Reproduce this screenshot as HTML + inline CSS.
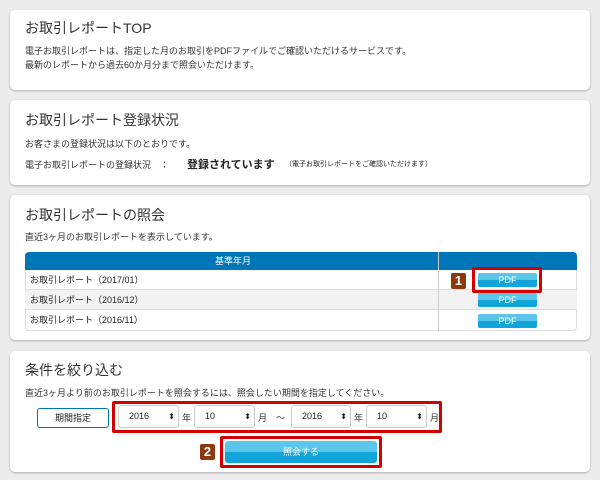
<!DOCTYPE html>
<html><head><meta charset="utf-8"><style>
*{box-sizing:border-box;margin:0;padding:0}
body{width:600px;height:480px;background:#ececec;font-family:"Liberation Sans","Noto Sans CJK JP",sans-serif;color:#222;position:relative;overflow:hidden}
.a{position:absolute;white-space:nowrap}
.card{position:absolute;left:10px;width:580px;background:#fff;border-radius:5px;box-shadow:0 1px 2px rgba(0,0,0,.25)}
.h{font-size:14px;color:#333}
.t{font-size:9px;color:#333}
.pdf{position:absolute;left:478px;width:59px;height:14px;border-radius:2px;background:linear-gradient(#5cc6ea 50%,#10a4d8 50%);color:#fff;font-size:9px;text-align:center;line-height:14px}
.sel{position:absolute;top:405px;height:23px;border:1px solid #ccc;border-radius:3px;background:#fff;font-size:9px;line-height:21px;padding-left:10px}
.sel:after{content:"⬍";position:absolute;right:3px;top:0;font-size:8px}
.red{position:absolute;border:3px solid #d40000;border-radius:2px}
.badge{position:absolute;background:#8b3a10;color:#fff;font-weight:bold;font-size:13px;text-align:center;line-height:16px;border-radius:2px;width:15px;height:16px}
.row{position:absolute;left:25px;width:552px;height:20px;border-bottom:1px solid #ddd;font-size:9px;line-height:20px;padding-left:5px}
</style></head><body>
<div class="card" style="top:10px;height:80px"></div>
<div class="a h" style="left:25px;top:18px">お取引レポートTOP</div>
<div class="a t" style="left:25px;top:44px">電子お取引レポートは、指定した月のお取引をPDFファイルでご確認いただけるサービスです。</div>
<div class="a t" style="left:25px;top:58px">最新のレポートから過去60か月分まで照会いただけます。</div>

<div class="card" style="top:100px;height:85px"></div>
<div class="a h" style="left:25px;top:110px">お取引レポート登録状況</div>
<div class="a t" style="left:25px;top:137px">お客さまの登録状況は以下のとおりです。</div>
<div class="a t" style="left:25px;top:158px">電子お取引レポートの登録状況　：</div>
<div class="a" style="left:187px;top:156px;font-size:11px;font-weight:bold">登録されています</div>
<div class="a" style="left:285px;top:159px;font-size:7px">（電子お取引レポートをご確認いただけます）</div>

<div class="card" style="top:195px;height:145px"></div>
<div class="a h" style="left:25px;top:205px">お取引レポートの照会</div>
<div class="a t" style="left:25px;top:230px">直近3ヶ月のお取引レポートを表示しています。</div>
<div class="a" style="left:25px;top:252px;width:552px;height:79px;border:1px solid #ddd;border-radius:4px"></div>
<div class="a" style="left:25px;top:252px;width:552px;height:18px;background:#0075b8;border-radius:4px 4px 0 0;color:#fff;font-size:9px;line-height:18px"><span style="position:absolute;left:190px">基準年月</span></div>
<div class="row" style="top:270px">お取引レポート（2017/01）</div>
<div class="row" style="top:290px;background:#f2f2f2">お取引レポート（2016/12）</div>
<div class="row" style="top:310px;border:none">お取引レポート（2016/11）</div>
<div class="a" style="left:438px;top:252px;width:1px;height:79px;background:#ccc"></div>
<div class="pdf" style="top:273px">PDF</div>
<div class="pdf" style="top:293px">PDF</div>
<div class="pdf" style="top:314px">PDF</div>
<div class="red" style="left:472px;top:267px;width:70px;height:26px"></div>
<div class="badge" style="left:451px;top:273px">1</div>

<div class="card" style="top:351px;height:121px"></div>
<div class="a h" style="left:25px;top:360px">条件を絞り込む</div>
<div class="a t" style="left:25px;top:386px">直近3ヶ月より前のお取引レポートを照会するには、照会したい期間を指定してください。</div>
<div class="a" style="left:37px;top:408px;width:72px;height:20px;border:1px solid #0075b8;border-radius:3px;font-size:9px;text-align:center;line-height:18px">期間指定</div>
<div class="sel" style="left:118px;width:61px">2016</div>
<div class="a t" style="left:182px;top:411px">年</div>
<div class="sel" style="left:194px;width:61px">10</div>
<div class="a t" style="left:258px;top:411px">月　～</div>
<div class="sel" style="left:291px;width:60px">2016</div>
<div class="a t" style="left:354px;top:411px">年</div>
<div class="sel" style="left:366px;width:61px">10</div>
<div class="a t" style="left:430px;top:411px">月</div>
<div class="red" style="left:112px;top:401px;width:330px;height:32px"></div>
<div class="a" style="left:225px;top:441px;width:152px;height:22px;border-radius:3px;background:linear-gradient(#5cc6ea 50%,#10a4d8 50%);color:#fff;font-size:9px;text-align:center;line-height:22px">照会する</div>
<div class="red" style="left:220px;top:436px;width:162px;height:32px"></div>
<div class="badge" style="left:200px;top:444px">2</div>
</body></html>
